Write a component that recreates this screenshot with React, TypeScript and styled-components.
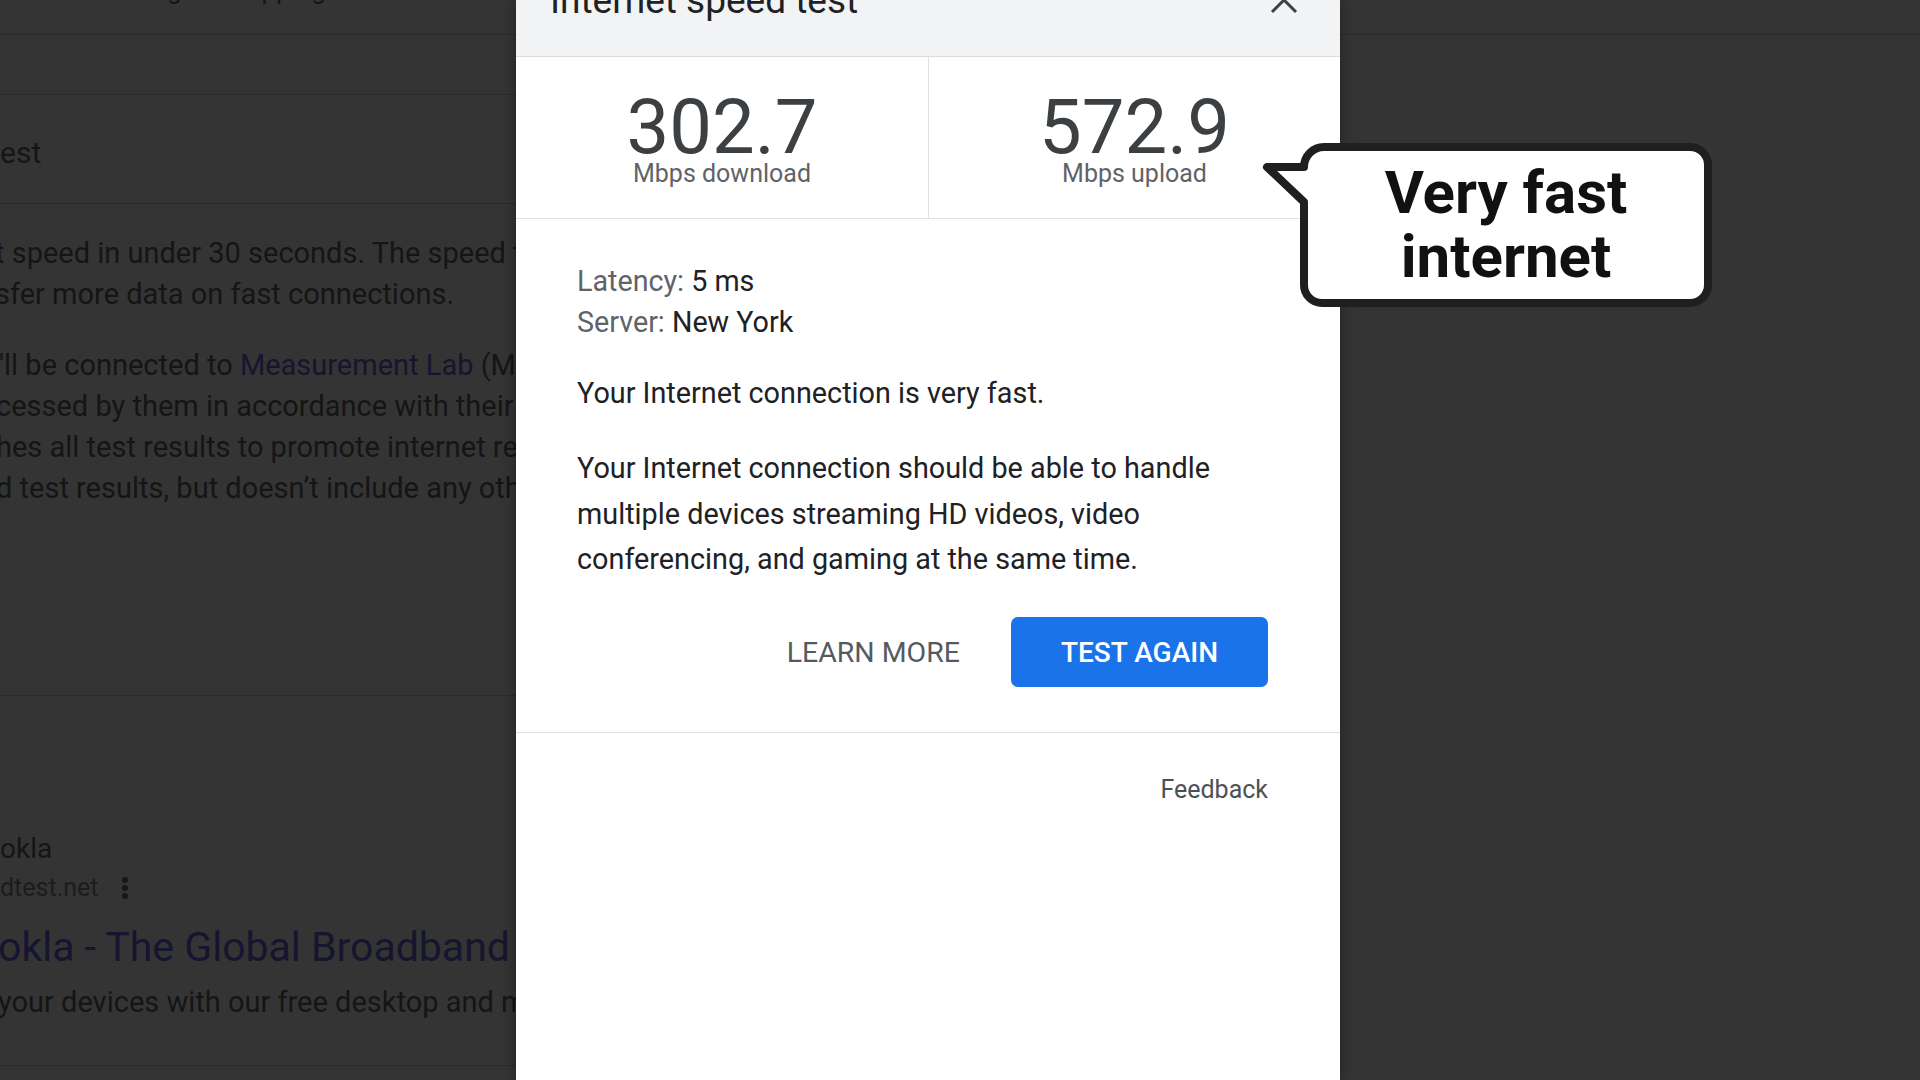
import React from "react";
import styled, { createGlobalStyle } from "styled-components";

const GlobalStyle = createGlobalStyle`
  html, body { margin: 0; padding: 0; background: #343434; }
  body { font-family: Roboto, "Noto Sans", "Liberation Sans", Arial, sans-serif; }
  * { box-sizing: border-box; }
`;

const Page = styled.div`
  position: relative;
  display: flex;
  width: 1920px;
  height: 1080px;
  overflow: hidden;
  background: #343434;
`;

/* ---------- dimmed background page ---------- */
const Backdrop = styled.div`
  width: 516px;
  flex-shrink: 0;
  overflow: hidden;
  display: flex;
  flex-direction: column;
  color: #151515;
`;

const NavStrip = styled.div`
  height: 35px;
  flex-shrink: 0;
  border-bottom: 1px solid #2a2a2a;
  display: flex;
  gap: 8px;
  padding-left: 123px;
  overflow: hidden;
`;

const NavItem = styled.span`
  margin-top: -25px;
  font-size: 26px;
  line-height: 30px;
  white-space: nowrap;
`;

const Strip = styled.div<{ $h: number }>`
  height: ${(p) => p.$h}px;
  flex-shrink: 0;
  border-bottom: 1px solid #2a2a2a;
`;

const HeadingBlock = styled.div`
  height: 109px;
  flex-shrink: 0;
  padding-top: 38px;
  border-bottom: 1px solid #2a2a2a;
`;

const Heading = styled.div`
  font-size: 30px;
  line-height: 40px;
  white-space: nowrap;
`;

const Description = styled.div`
  height: 492px;
  flex-shrink: 0;
  padding-top: 29px;
  border-bottom: 1px solid #2a2a2a;
  display: flex;
  flex-direction: column;
  gap: 30px;
`;

const Para = styled.div`
  display: flex;
  flex-direction: column;
`;

const BgLine = styled.div<{ $shift: number }>`
  margin-left: ${(p) => p.$shift}px;
  font-size: 29px;
  line-height: 41px;
  white-space: nowrap;
`;

const BgLink = styled.span`
  color: #16152f;
`;

const Result = styled.div`
  height: 370px;
  flex-shrink: 0;
  padding-top: 135px;
  border-bottom: 1px solid #2a2a2a;
  display: flex;
  flex-direction: column;
`;

const SiteName = styled.div`
  font-size: 28px;
  line-height: 36px;
  white-space: nowrap;
`;

const SiteUrl = styled.div`
  margin-top: 4px;
  display: flex;
  align-items: center;
  gap: 22px;
  font-size: 25px;
  line-height: 34px;
  color: #1c1c1c;
  white-space: nowrap;
`;

const ResultTitle = styled.div`
  margin-top: 17px;
  margin-left: -2px;
  font-size: 41px;
  line-height: 50px;
  color: #16152f;
  white-space: nowrap;
`;

const Snippet = styled.div`
  margin-top: 10px;
  margin-left: -2px;
  font-size: 29px;
  line-height: 41px;
  white-space: nowrap;
`;

/* ---------- speed test panel ---------- */
const Panel = styled.section`
  position: relative;
  z-index: 1;
  width: 824px;
  flex-shrink: 0;
  background: #ffffff;
  display: flex;
  flex-direction: column;
  box-shadow: 0 0 14px rgba(0, 0, 0, 0.35);
`;

const Header = styled.header`
  margin-top: -56px;
  height: 113px;
  flex-shrink: 0;
  background: #f1f3f4;
  border-bottom: 1px solid #dadce0;
  display: flex;
  align-items: center;
  justify-content: space-between;
  padding: 0 42px 0 34px;
`;

const Title = styled.h1`
  margin: 0;
  font-size: 37px;
  font-weight: 400;
  color: #202124;
  white-space: nowrap;
`;

const CloseButton = styled.button`
  border: 0;
  padding: 0;
  background: transparent;
  width: 28px;
  height: 28px;
  display: flex;
`;

const Stats = styled.div`
  display: grid;
  grid-template-columns: 1fr 1fr;
  border-bottom: 1px solid #e0e0e0;
`;

const StatCell = styled.div`
  display: flex;
  flex-direction: column;
  align-items: center;
  padding: 35px 0 32px;
  & + & {
    border-left: 1px solid #e0e0e0;
  }
`;

const StatValue = styled.div`
  font-size: 76px;
  line-height: 70px;
  color: #3c4043;
`;

const StatLabel = styled.div`
  font-size: 25px;
  line-height: 24px;
  color: #5f6368;
`;

const Body = styled.div`
  padding: 42px 72px 45px 61px;
  border-bottom: 1px solid #e0e0e0;
  display: flex;
  flex-direction: column;
`;

const InfoLine = styled.div`
  font-size: 28.7px;
  line-height: 41px;
  color: #202124;
`;

const InfoLabel = styled.span`
  color: #5f6368;
`;

const Text = styled.p<{ $gap: number }>`
  margin: ${(p) => p.$gap}px 0 0;
  font-size: 28.8px;
  line-height: 45.5px;
  color: #202124;
`;

const Actions = styled.div`
  margin-top: 34.5px;
  display: flex;
  justify-content: flex-end;
  align-items: center;
  gap: 27px;
`;

const TextButton = styled.button`
  height: 70px;
  padding: 0 24px;
  border: 0;
  background: transparent;
  font-family: inherit;
  font-size: 28.5px;
  color: #555a5f;
`;

const PrimaryButton = styled.button`
  height: 70px;
  padding: 0 50px;
  border: 0;
  border-radius: 7px;
  background: #1a73e8;
  font-family: inherit;
  font-size: 28px;
  font-weight: 500;
  color: #ffffff;
`;

const Footer = styled.div`
  padding: 42px 72px 0 61px;
  display: flex;
  justify-content: flex-end;
`;

const FeedbackLink = styled.span`
  font-size: 25px;
  line-height: 30px;
  color: #4d5156;
`;

/* ---------- right side ---------- */
const RightArea = styled.div`
  flex: 1;
  display: flex;
  flex-direction: column;
`;

/* ---------- speech bubble overlay ---------- */
const Bubble = styled.div`
  position: absolute;
  left: 1260px;
  top: 140px;
  width: 456px;
  height: 170px;
  z-index: 2;
  display: flex;
  align-items: center;
  justify-content: center;
  padding-left: 44px;
  padding-right: 8px;
`;

const BubbleShape = styled.svg`
  position: absolute;
  inset: 0;
  overflow: visible;
`;

const BubbleText = styled.div`
  position: relative;
  font-size: 60px;
  line-height: 64px;
  font-weight: 700;
  color: #111111;
  text-align: center;
`;

export default function App() {
  return (
    <>
      <GlobalStyle />
      <Page>
        <Backdrop>
          <NavStrip>
            <NavItem>Images</NavItem>
            <NavItem>Shopping</NavItem>
          </NavStrip>
          <Strip $h={60} />
          <HeadingBlock>
            <Heading>est</Heading>
          </HeadingBlock>
          <Description>
            <Para>
              <BgLine $shift={-5}>t speed in under 30 seconds. The speed test usually</BgLine>
              <BgLine $shift={-5}>sfer more data on fast connections.</BgLine>
            </Para>
            <Para>
              <BgLine $shift={-1}>
                'll be connected to <BgLink>Measurement Lab</BgLink> (M-Lab) and your IP
              </BgLine>
              <BgLine $shift={-4}>
                cessed by them in accordance with their <BgLink>privacy policy</BgLink>
              </BgLine>
              <BgLine $shift={-4}>hes all test results to promote internet research.</BgLine>
              <BgLine $shift={-4}>d test results, but doesn’t include any other information</BgLine>
            </Para>
          </Description>
          <Result>
            <SiteName>okla</SiteName>
            <SiteUrl>
              dtest.net
              <svg width="10" height="26" viewBox="0 0 10 26">
                <circle cx="5" cy="5" r="3" fill="#161616" />
                <circle cx="5" cy="13" r="3" fill="#161616" />
                <circle cx="5" cy="21" r="3" fill="#161616" />
              </svg>
            </SiteUrl>
            <ResultTitle>okla - The Global Broadband Speed Test</ResultTitle>
            <Snippet>your devices with our free desktop and mobile apps.</Snippet>
          </Result>
        </Backdrop>

        <Panel>
          <Header>
            <Title>Internet speed test</Title>
            <CloseButton aria-label="Close">
              <svg width="28" height="28" viewBox="0 0 28 28">
                <path d="M2 2 L26 26 M26 2 L2 26" stroke="#3c4043" strokeWidth="3" />
              </svg>
            </CloseButton>
          </Header>
          <Stats>
            <StatCell>
              <StatValue>302.7</StatValue>
              <StatLabel>Mbps download</StatLabel>
            </StatCell>
            <StatCell>
              <StatValue>572.9</StatValue>
              <StatLabel>Mbps upload</StatLabel>
            </StatCell>
          </Stats>
          <Body>
            <InfoLine>
              <InfoLabel>Latency:</InfoLabel> 5 ms
            </InfoLine>
            <InfoLine>
              <InfoLabel>Server:</InfoLabel> New York
            </InfoLine>
            <Text $gap={28}>Your Internet connection is very fast.</Text>
            <Text $gap={29.5}>
              Your Internet connection should be able to handle multiple devices streaming HD
              videos, video conferencing, and gaming at the same time.
            </Text>
            <Actions>
              <TextButton>LEARN MORE</TextButton>
              <PrimaryButton>TEST AGAIN</PrimaryButton>
            </Actions>
          </Body>
          <Footer>
            <FeedbackLink>Feedback</FeedbackLink>
          </Footer>
        </Panel>

        <RightArea>
          <Strip $h={35} />
        </RightArea>

        <Bubble>
          <BubbleShape viewBox="0 0 456 170" width="456" height="170">
            <path
              d="M7 27 L44 27 A20 20 0 0 1 64 7 L430 7 A18 18 0 0 1 448 25 L448 145 A18 18 0 0 1 430 163 L62 163 A18 18 0 0 1 44 145 L44 62 Z"
              fill="#ffffff"
              stroke="#1f1f1f"
              strokeWidth="8"
              strokeLinejoin="round"
            />
          </BubbleShape>
          <BubbleText>
            Very fast
            <br />
            internet
          </BubbleText>
        </Bubble>
      </Page>
    </>
  );
}
